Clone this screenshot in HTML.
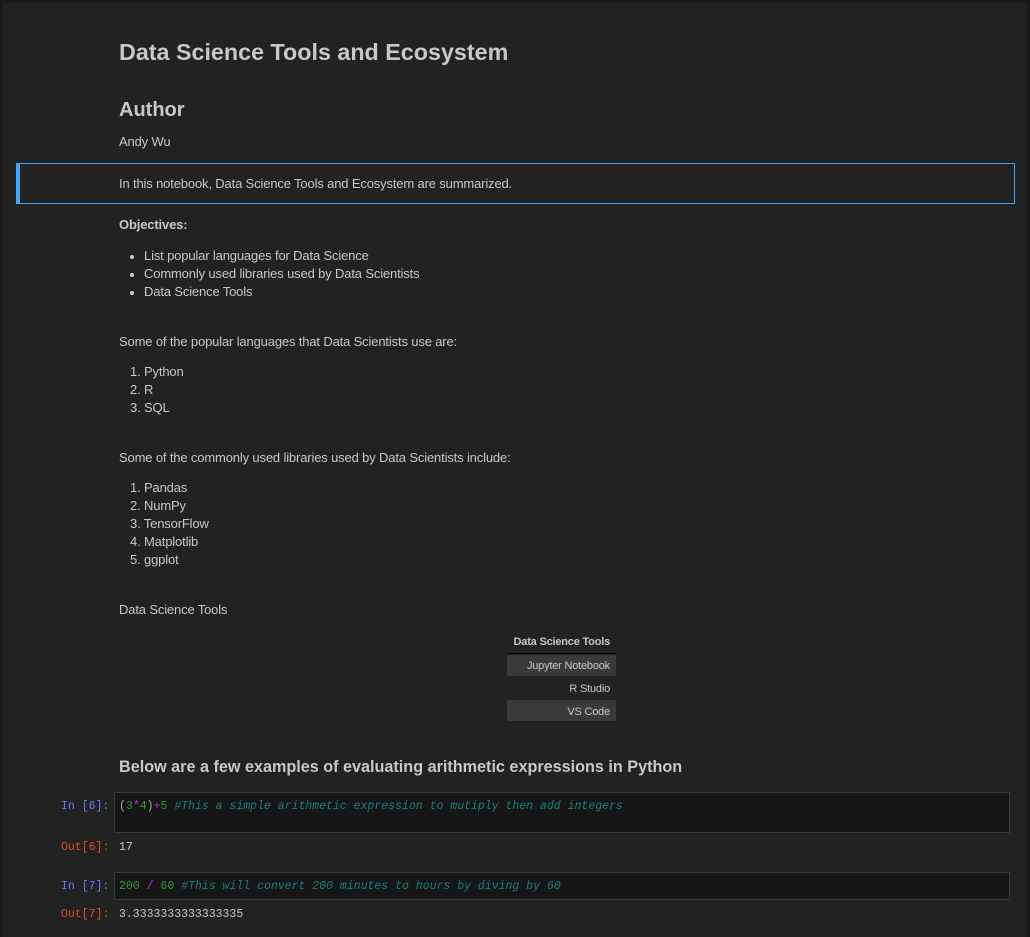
<!DOCTYPE html>
<html><head><meta charset="utf-8"><style>
html,body{margin:0;padding:0;}
body{width:1030px;height:937px;background:#1a1a1a;position:relative;overflow:hidden;font-family:"Liberation Sans",Arial,sans-serif;color:#c8c8c8;}
#main{position:absolute;left:3px;top:3px;width:1024px;height:934px;background:#222;}
.t{position:absolute;white-space:nowrap;font-size:13px;letter-spacing:-0.15px;line-height:18px;}
.b{font-weight:bold;}
.m{font-family:"Liberation Mono",monospace;font-size:11.5px;letter-spacing:0;}
.box{position:absolute;border:1px solid #3a3a3a;background:#161616;}
.dot{position:absolute;width:4px;height:4px;border-radius:50%;background:#c8c8c8;}
</style></head><body>
<div id="main"></div>
<div class="t b" style="left:119px;top:38px;font-size:23.3px;line-height:28px;letter-spacing:0">Data Science Tools and Ecosystem</div>
<div class="t b" style="left:119px;top:97px;font-size:20px;line-height:26px;letter-spacing:0">Author</div>
<div class="t" style="left:119px;top:133px">Andy Wu</div>
<div style="position:absolute;left:16px;top:163px;width:994px;height:39px;border:1px solid #42a5f5;border-left:4px solid #42a5f5;"></div>
<div class="t" style="left:119px;top:175px">In this notebook, Data Science Tools and Ecosystem are summarized.</div>
<div class="t b" style="left:119px;top:216px">Objectives:</div>
<div class="dot" style="left:130px;top:255px"></div><div class="t" style="left:144px;top:247px">List popular languages for Data Science</div>
<div class="dot" style="left:130px;top:273px"></div><div class="t" style="left:144px;top:265px">Commonly used libraries used by Data Scientists</div>
<div class="dot" style="left:130px;top:291px"></div><div class="t" style="left:144px;top:283px">Data Science Tools</div>
<div class="t" style="left:119px;top:333px">Some of the popular languages that Data Scientists use are:</div>
<div class="t" style="left:130px;top:363px">1. Python</div>
<div class="t" style="left:130px;top:381px">2. R</div>
<div class="t" style="left:130px;top:399px">3. SQL</div>
<div class="t" style="left:119px;top:449px">Some of the commonly used libraries used by Data Scientists include:</div>
<div class="t" style="left:130px;top:479px">1. Pandas</div>
<div class="t" style="left:130px;top:497px">2. NumPy</div>
<div class="t" style="left:130px;top:515px">3. TensorFlow</div>
<div class="t" style="left:130px;top:533px">4. Matplotlib</div>
<div class="t" style="left:130px;top:551px">5. ggplot</div>
<div class="t" style="left:119px;top:601px">Data Science Tools</div>
<div class="t b" style="left:507px;width:103px;text-align:right;top:633px;font-size:11px;letter-spacing:-0.2px">Data Science Tools</div>
<div style="position:absolute;left:507px;top:653px;width:109px;height:1px;background:#000"></div>
<div style="position:absolute;left:507px;top:655px;width:109px;height:21px;background:#3a3a3a"></div>
<div class="t" style="left:507px;width:103px;text-align:right;top:657px;font-size:11px;letter-spacing:-0.2px">Jupyter Notebook</div>
<div class="t" style="left:507px;width:103px;text-align:right;top:680px;font-size:11px;letter-spacing:-0.2px">R Studio</div>
<div style="position:absolute;left:507px;top:700px;width:109px;height:21px;background:#3a3a3a"></div>
<div class="t" style="left:507px;width:103px;text-align:right;top:703px;font-size:11px;letter-spacing:-0.2px">VS Code</div>
<div class="t b" style="left:119px;top:757px;font-size:16.2px;line-height:20px;letter-spacing:0">Below are a few examples of evaluating arithmetic expressions in Python</div>
<div class="t m" style="left:61px;top:798px;color:#6b7cf5">In [6]:</div>
<div class="box" style="left:114px;top:792px;width:894px;height:39px"></div>
<div class="t m" style="left:119px;top:798px"><span style="color:#aaa">(</span><span style="color:#2e9b2e">3</span><span style="color:#b030e0">*</span><span style="color:#2e9b2e">4</span><span style="color:#aaa">)</span><span style="color:#b030e0">+</span><span style="color:#2e9b2e">5</span> <i style="color:#1a7f7f">#This a simple arithmetic expression to mutiply then add integers</i></div>
<div class="t m" style="left:61px;top:839px;color:#d8502a">Out[6]:</div>
<div class="t m" style="left:119px;top:839px">17</div>
<div class="t m" style="left:61px;top:878px;color:#6b7cf5">In [7]:</div>
<div class="box" style="left:114px;top:872px;width:894px;height:26px"></div>
<div class="t m" style="left:119px;top:878px"><span style="color:#2e9b2e">200</span> <span style="color:#b030e0">/</span> <span style="color:#2e9b2e">60</span> <i style="color:#1a7f7f">#This will convert 200 minutes to hours by diving by 60</i></div>
<div class="t m" style="left:61px;top:906px;color:#d8502a">Out[7]:</div>
<div class="t m" style="left:119px;top:906px">3.3333333333333335</div>
</body></html>
